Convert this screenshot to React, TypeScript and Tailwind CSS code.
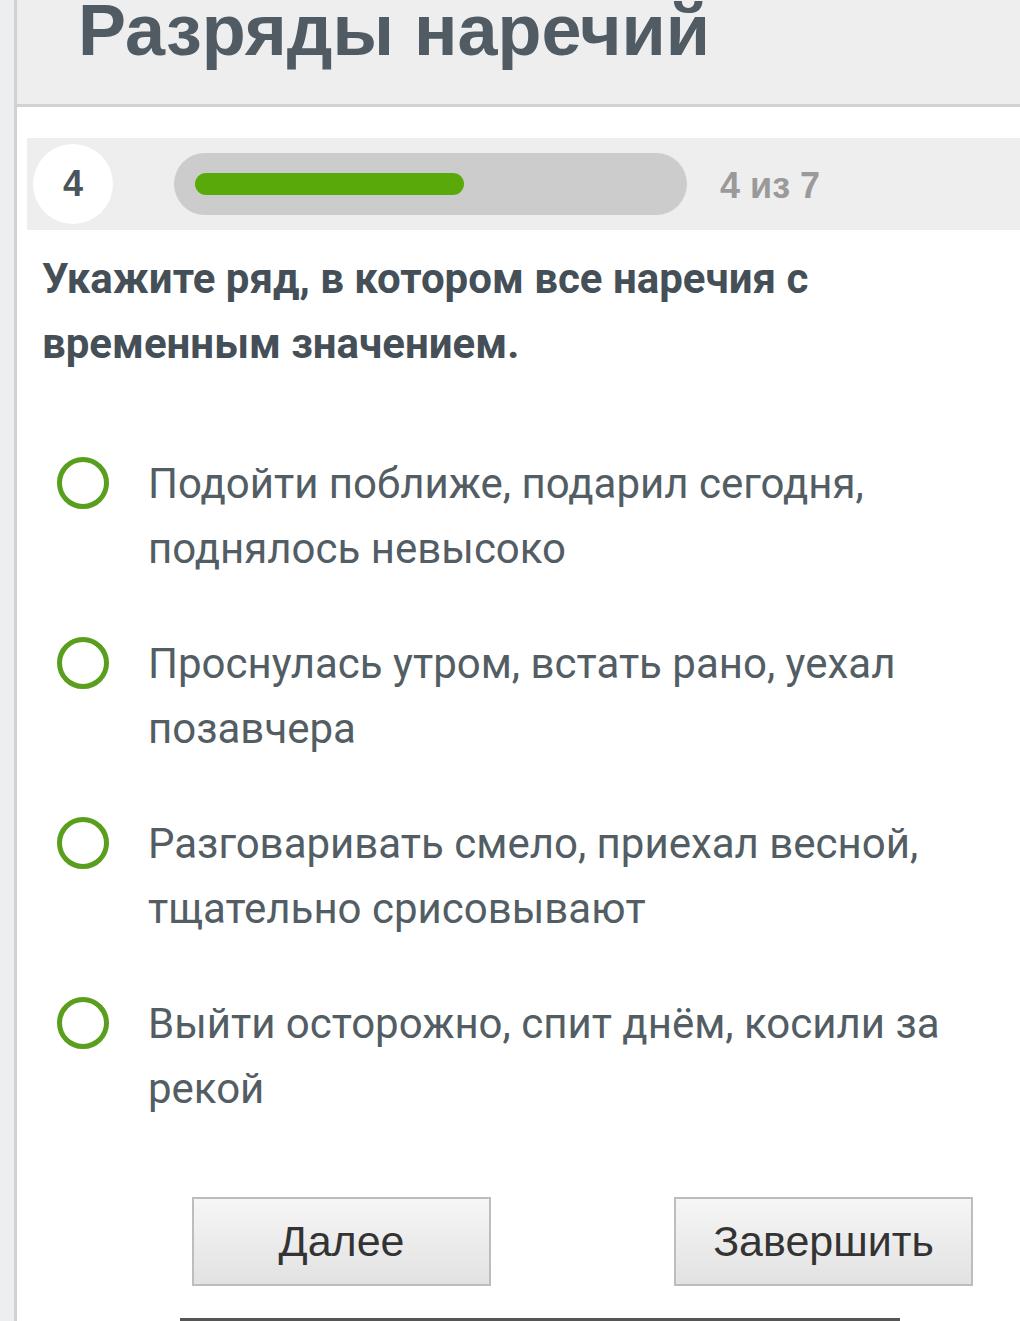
import { useState } from 'react'

const options = [
  'Подойти поближе, подарил сегодня, поднялось невысоко',
  'Проснулась утром, встать рано, уехал позавчера',
  'Разговаривать смело, приехал весной, тщательно срисовывают',
  'Выйти осторожно, спит днём, косили за рекой',
]

const arial = { fontFamily: '"Liberation Sans", Arial, sans-serif' }
const roboto = { fontFamily: 'Roboto, "Noto Sans", sans-serif' }

export default function App() {
  const [picked, setPicked] = useState<number | null>(null)
  const step = 4
  const total = 7

  return (
    <div className="flex min-h-[1321px] w-[1020px] overflow-hidden bg-white">
      {/* left rail */}
      <div className="w-[17px] shrink-0 border-r-[3px] border-[#cfd1d3] bg-[#eceef0]" />

      <div className="flex min-w-0 flex-1 flex-col">
        <header className="flex h-[107px] items-start overflow-hidden border-b-[3px] border-[#d2d2d2] bg-[#eeeeee] pl-[61px]">
          <h1
            className="mt-[-6px] text-[72px] leading-none font-bold whitespace-nowrap text-[#505b63]"
            style={arial}
          >
            Разряды наречий
          </h1>
        </header>

        {/* progress */}
        <div className="mt-[31px] ml-[10px] flex h-[92px] items-center bg-[#eeeeee] pl-[6px]">
          <div
            className="flex h-[80px] w-[80px] items-center justify-center rounded-full bg-white text-[36px] font-bold text-[#4a545b]"
            style={arial}
          >
            {step}
          </div>
          <div className="ml-[61px] flex h-[62px] w-[513px] items-center rounded-full bg-[#cccccc] px-[21px]">
            <div
              className="h-[22px] rounded-full bg-[#5aa90a]"
              style={{ width: `${(step / total) * 470}px` }}
            />
          </div>
          <div className="ml-[33px] pt-[4px] text-[36px] font-bold text-[#9a9a9a]" style={arial}>
            {step} из {total}
          </div>
        </div>

        {/* question */}
        <p
          className="mt-[16px] ml-[25px] w-[850px] text-[42px] leading-[65px] font-bold text-[#454f57]"
          style={roboto}
        >
          Укажите ряд, в котором все наречия с временным значением.
        </p>

        <div className="mt-[75px] flex flex-col gap-[50px]">
          {options.map((o, i) => (
            <button
              key={i}
              onClick={() => setPicked(i)}
              className="flex items-start text-left"
            >
              <span className="mt-[6px] ml-[40px] flex h-[52px] w-[52px] shrink-0 items-center justify-center rounded-full border-[5px] border-[#5a9e1e]">
                {picked === i && <span className="h-[24px] w-[24px] rounded-full bg-[#5a9e1e]" />}
              </span>
              <span
                className="ml-[39px] w-[820px] text-[42px] leading-[65px] text-[#535d64]"
                style={roboto}
              >
                {o}
              </span>
            </button>
          ))}
        </div>

        <div className="mt-[76px] flex pl-[175px]">
          <button
            className="h-[89px] w-[299px] border-2 border-[#bdbdbd] bg-gradient-to-b from-[#f6f6f6] to-[#e2e2e2] text-[43px] text-[#333333]"
            style={arial}
          >
            Далее
          </button>
          <button
            className="ml-[183px] h-[89px] w-[299px] border-2 border-[#bdbdbd] bg-gradient-to-b from-[#f6f6f6] to-[#e2e2e2] text-[43px] text-[#333333]"
            style={arial}
          >
            Завершить
          </button>
        </div>

        <div className="mt-auto ml-[163px] h-[3px] w-[720px] bg-[#555555]" />
      </div>
    </div>
  )
}
